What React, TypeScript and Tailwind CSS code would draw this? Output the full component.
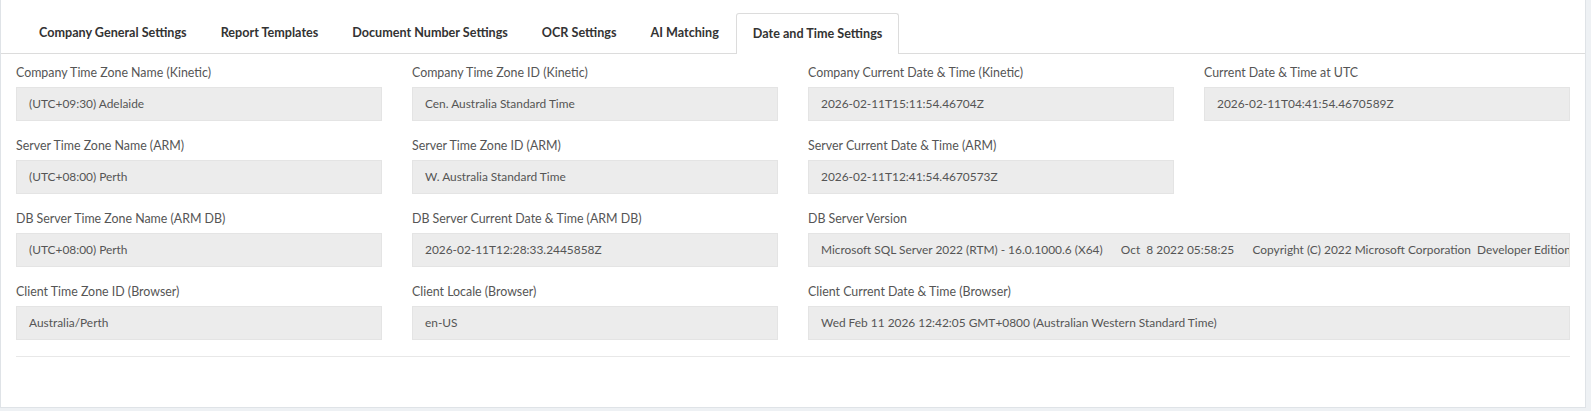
import React from 'react';

interface Field {
  label: string;
  value: string;
  wide?: boolean;
}

const tabs = [
  'Company General Settings',
  'Report Templates',
  'Document Number Settings',
  'OCR Settings',
  'AI Matching',
  'Date and Time Settings',
];

const rows: (Field | null)[][] = [
  [
    { label: 'Company Time Zone Name (Kinetic)', value: '(UTC+09:30) Adelaide' },
    { label: 'Company Time Zone ID (Kinetic)', value: 'Cen. Australia Standard Time' },
    { label: 'Company Current Date & Time (Kinetic)', value: '2026-02-11T15:11:54.46704Z' },
    { label: 'Current Date & Time at UTC', value: '2026-02-11T04:41:54.4670589Z' },
  ],
  [
    { label: 'Server Time Zone Name (ARM)', value: '(UTC+08:00) Perth' },
    { label: 'Server Time Zone ID (ARM)', value: 'W. Australia Standard Time' },
    { label: 'Server Current Date & Time (ARM)', value: '2026-02-11T12:41:54.4670573Z' },
    null,
  ],
  [
    { label: 'DB Server Time Zone Name (ARM DB)', value: '(UTC+08:00) Perth' },
    { label: 'DB Server Current Date & Time (ARM DB)', value: '2026-02-11T12:28:33.2445858Z' },
    {
      label: 'DB Server Version',
      value:
        'Microsoft SQL Server 2022 (RTM) - 16.0.1000.6 (X64)      Oct  8 2022 05:58:25      Copyright (C) 2022 Microsoft Corporation  Developer Edition (64-bit) on Windows Server 2022 Standard 10.0 <X64> (Build 20348: ) (Hypervisor)',
      wide: true,
    },
  ],
  [
    { label: 'Client Time Zone ID (Browser)', value: 'Australia/Perth' },
    { label: 'Client Locale (Browser)', value: 'en-US' },
    {
      label: 'Client Current Date & Time (Browser)',
      value: 'Wed Feb 11 2026 12:42:05 GMT+0800 (Australian Western Standard Time)',
      wide: true,
    },
  ],
];

const FieldBox: React.FC<{ field: Field }> = ({ field }) => (
  <div className={field.wide ? 'col-span-2 min-w-0' : 'min-w-0'}>
    <div className="h-[18px] leading-[18px] text-[12.4px] text-[#555] mb-[5px] whitespace-nowrap">{field.label}</div>
    <div className="h-[34px] bg-[#ececec] border border-[#e4e4e4] px-3 flex items-center text-[11.9px] text-[#555] whitespace-pre overflow-hidden">
      {field.value}
    </div>
  </div>
);

export default function App() {
  return (
    <div className="w-[1591px] h-[411px] bg-[#eef1f4] overflow-hidden" style={{ fontFamily: 'Lato, "Open Sans", sans-serif' }}>
      <div className="w-[1586px] h-[408px] bg-white border-l border-r border-b border-[#dfe3e7] flex flex-col">
        <div className="h-[54px] flex items-end pl-[21px] border-b border-[#dcdcdc]">
          {tabs.map((t, i) => {
            const active = i === tabs.length - 1;
            return (
              <div
                key={t}
                className={
                  active
                    ? 'h-[41px] -mb-px px-4 flex items-center text-[12.6px] font-bold text-[#333] bg-white border border-b-0 border-[#dcdcdc] rounded-t-[3px]'
                    : 'h-[41px] -mb-px px-4 flex items-center text-[12.6px] font-bold text-[#333] border border-transparent'
                }
              >
                {t}
              </div>
            );
          })}
        </div>
        <div className="px-[15px] pt-[10px]">
          {rows.map((row, ri) => (
            <div key={ri} className="grid grid-cols-4 gap-x-[30px] mb-4">
              {row.map((f, ci) => (f ? <FieldBox key={ci} field={f} /> : <div key={ci} />))}
            </div>
          ))}
          <div className="border-t border-[#e8e8e8]" />
        </div>
      </div>
    </div>
  );
}
